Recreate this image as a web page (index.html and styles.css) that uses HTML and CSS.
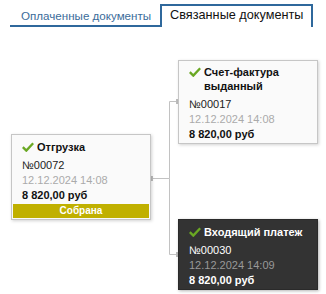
FILE: index.html
```html
<!DOCTYPE html>
<html lang="ru">
<head>
    <meta charset="UTF-8">
    <meta name="viewport" content="width=device-width, initial-scale=1.0">
    <title>Связанные документы</title>
    <link rel="stylesheet" href="styles.css">
</head>
<body>
    <div class="tabs">
        <div class="tab">Оплаченные документы</div>
        <div class="tab active">Связанные документы</div>
    </div>

    <div class="canvas">
        <svg class="links" width="326" height="268">
            <path d="M150 151.5 H169.5 V74.5 H178 M169.5 151.5 V227.5 H178" fill="none" stroke="#c2c2c2" stroke-width="1"/>
            <rect x="148" y="149" width="5" height="5" fill="#bdbdbd"/>
            <rect x="176" y="72" width="5" height="5" fill="#bdbdbd"/>
            <rect x="176" y="225" width="5" height="5" fill="#bdbdbd"/>
        </svg>

        <div class="card card-ship">
            <div class="card-title">
                <svg class="check" width="12" height="10" viewBox="0 0 12 10"><path d="M0.8 5.2 L4.3 8.6 L11.2 1.2" fill="none" stroke="#6aa823" stroke-width="2.4"/></svg>
                <span>Отгрузка</span>
            </div>
            <div class="card-num">№00072</div>
            <div class="card-date">12.12.2024 14:08</div>
            <div class="card-sum">8 820,00 руб</div>
            <div class="status">Собрана</div>
        </div>

        <div class="card card-invoice">
            <div class="card-title">
                <svg class="check" width="12" height="10" viewBox="0 0 12 10"><path d="M0.8 5.2 L4.3 8.6 L11.2 1.2" fill="none" stroke="#6aa823" stroke-width="2.4"/></svg>
                <span>Счет-фактура выданный</span>
            </div>
            <div class="card-num">№00017</div>
            <div class="card-date">12.12.2024 14:08</div>
            <div class="card-sum">8 820,00 руб</div>
        </div>

        <div class="card card-payment dark">
            <div class="card-title">
                <svg class="check" width="12" height="10" viewBox="0 0 12 10"><path d="M0.8 5.2 L4.3 8.6 L11.2 1.2" fill="none" stroke="#6aa823" stroke-width="2.4"/></svg>
                <span>Входящий платеж</span>
            </div>
            <div class="card-num">№00030</div>
            <div class="card-date">12.12.2024 14:09</div>
            <div class="card-sum">8 820,00 руб</div>
        </div>
    </div>
</body>
</html>
```

FILE: styles.css
```css
body {
    font-family: "Liberation Sans", Arial, sans-serif;
    margin: 0;
    padding: 0;
    background-color: #ffffff;
    color: #222;
}
.tabs {
    display: flex;
    margin: 4px 0 0 10px;
    white-space: nowrap;
}
.tab {
    flex: none;
    font-size: 11.6px;
    line-height: 19px;
    padding: 2px 9px 0 11px;
    color: #3b6c9a;
    border-bottom: 2px solid #2f689c;
}
.tab.active {
    font-size: 12.7px;
    line-height: 19px;
    padding: 0 8px 2px 8px;
    color: #111;
    border: 2px solid #2f689c;
    border-bottom: none;
}
.canvas {
    position: relative;
    height: 268px;
}
.links {
    position: absolute;
    left: 0;
    top: 0;
}
.card {
    position: absolute;
    width: 118px;
    padding: 5px 10px 1px 10px;
    background: #fafafa;
    border: 1px solid #c6c6c6;
    box-shadow: 1px 1px 3px rgba(0, 0, 0, 0.18);
    font-size: 11px;
    line-height: 15px;
}
.card-ship {
    left: 11px;
    top: 107px;
}
.card-invoice {
    left: 178px;
    top: 33px;
    padding-top: 4px;
}
.card-payment {
    left: 178px;
    top: 192px;
}
.card-title {
    display: flex;
    align-items: flex-start;
    font-weight: bold;
    line-height: 14px;
    margin-bottom: 4px;
    color: #111;
}
.check {
    flex: none;
    margin: 2px 3px 0 0;
}
.card-num {
    color: #222;
}
.card-date {
    color: #aaa;
}
.card-sum {
    font-weight: bold;
    color: #111;
}
.status {
    margin: 1px -9px 0 -9px;
    background: #c0b000;
    color: #fff;
    font-weight: bold;
    font-size: 10px;
    line-height: 14px;
    text-align: center;
}
.dark {
    background: #333;
    border-color: #2a2a2a;
    box-shadow: 1px 1px 3px rgba(0, 0, 0, 0.3);
}
.dark .card-title,
.dark .card-num,
.dark .card-sum {
    color: #fff;
}
.dark .card-date {
    color: #999;
}
```
